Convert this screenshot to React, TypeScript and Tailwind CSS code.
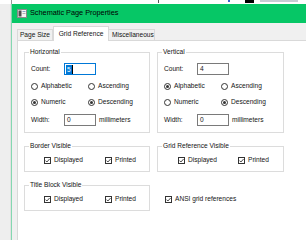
import React from 'react';

const Radio = ({ label, checked, w }: { label: string; checked?: boolean; w?: string }) => (
  <div className={`flex items-center h-[12px] ${w ?? ''}`}>
    <span className="w-[7px] h-[7px] rounded-full border border-[#333] bg-white flex items-center justify-center shrink-0">
      {checked && <span className="w-[3px] h-[3px] rounded-full bg-[#333]" />}
    </span>
    <span className="ml-[3px]">{label}</span>
  </div>
);

const Check = ({ label, w }: { label: string; w?: string }) => (
  <div className={`flex items-center h-[10px] ${w ?? ''}`}>
    <svg width="7" height="7" viewBox="0 0 7 7" className="shrink-0">
      <rect x="0.5" y="0.5" width="6" height="6" fill="#fff" stroke="#333" />
      <polyline points="1.5,3.6 2.9,5 5.6,2" fill="none" stroke="#333" strokeWidth="0.9" />
    </svg>
    <span className="ml-[3px]">{label}</span>
  </div>
);

const Field = ({ value, focused }: { value: string; focused?: boolean }) => (
  <div
    className={`w-[32px] h-[12px] bg-white border flex items-center pl-[1px] ${
      focused ? 'border-[#0078d7]' : 'border-[#7a7a7a]'
    }`}
  >
    {focused ? (
      <>
        <span className="bg-[#0078d7] text-white h-[9px] leading-[9px] px-[1px]">{value}</span>
        <span className="w-[1px] h-[9px] bg-black" />
      </>
    ) : (
      <span className="pl-[1px]">{value}</span>
    )}
  </div>
);

const Group = ({ title, children, className }: { title: string; children: React.ReactNode; className?: string }) => (
  <fieldset className={`border border-[#dcdcdc] px-[6px] pb-[6px] ${className ?? ''}`}>
    <legend className="-ml-[2px] px-[1px] leading-[8px]">{title}</legend>
    {children}
  </fieldset>
);

const AxisGroup = ({ title, count, focused, alpha }: { title: string; count: string; focused?: boolean; alpha?: boolean }) => (
  <Group title={title}>
    <div className="flex items-center mt-[7px]">
      <span className="w-[33px]">Count:</span>
      <Field value={count} focused={focused} />
    </div>
    <div className="flex mt-[5px]">
      <Radio label="Alphabetic" checked={alpha} w="w-[57px]" />
      <Radio label="Ascending" />
    </div>
    <div className="flex mt-[4px]">
      <Radio label="Numeric" checked={!alpha} w="w-[57px]" />
      <Radio label="Descending" checked />
    </div>
    <div className="flex items-center mt-[6px]">
      <span className="w-[33px]">Width:</span>
      <Field value="0" />
      <span className="ml-[3px] whitespace-nowrap">millimeters</span>
    </div>
  </Group>
);

export default function App() {
  return (
    <div className="w-[306px] h-[240px] overflow-hidden bg-[#f1f1f1] flex flex-col text-[6.6px] text-[#141414] font-['Liberation_Sans',Arial,sans-serif]">
      {/* strip of the app behind the dialog */}
      <div className="h-[4px] bg-white flex items-start shrink-0">
        <span className="ml-[11px] w-[1px] h-[4px] bg-[#9a9a9a]" />
        <span className="ml-[146px] w-[1px] h-[3px] bg-[#555]" />
        <span className="ml-[69px] w-[2px] h-[2px] bg-[#3a5fcf]" />
        <span className="ml-[15px] w-[9px] h-[3px] bg-black" />
        <span className="ml-[6px] w-[38px] h-[2px] bg-[#c8ccd4]" />
      </div>
      <div className="flex flex-1 min-h-0">
        <div className="w-[11px] bg-[#eeeeee] border-r border-[#e2e2e2]" />
        <div className="w-[1px] bg-[#84d8b1]" />
        <div className="flex-1 flex flex-col min-w-0">
          <div className="h-[19px] bg-[#06c766] flex items-center pl-[5px] shrink-0">
            <svg width="10" height="9" viewBox="0 0 10 9" className="shrink-0">
              <rect x="0.5" y="0.5" width="9" height="8" fill="#f4f4f4" stroke="#8a8a8a" />
              <rect x="1.5" y="1.5" width="3" height="6" fill="#4c4c4c" />
              <rect x="5.5" y="2" width="3" height="1" fill="#8aa3c8" />
              <rect x="5.5" y="4" width="3" height="1" fill="#b0b0b0" />
            </svg>
            <span className="ml-[3px] text-[7.3px] text-black">Schematic Page Properties</span>
          </div>
          <div className="flex-1 bg-[#f0f0f0] pl-[5px] pt-[3px] flex flex-col min-h-0">
            <div className="flex items-end h-[14px] shrink-0">
              <div className="w-[36px] h-[11px] border border-b-0 border-[#d9d9d9] flex items-center justify-center">
                Page Size
              </div>
              <div className="relative z-10 w-[56px] h-[15px] -mb-[1px] bg-white border border-b-0 border-[#d9d9d9] flex items-start pt-[2px] justify-center">
                Grid Reference
              </div>
              <div className="w-[46px] h-[11px] border border-b-0 border-l-0 border-[#d9d9d9] flex items-center pl-[3px]">
                Miscellaneous
              </div>
            </div>
            <div className="flex-1 w-[320px] bg-white border-l border-t border-[#d9d9d9] pl-[6px] pt-[7px]">
              <div className="grid grid-cols-[126px_127px] gap-x-[7px] gap-y-[9px]">
                <AxisGroup title="Horizontal" count="5" focused />
                <AxisGroup title="Vertical" count="4" alpha />
                <Group title="Border Visible">
                  <div className="flex mt-[5px] pl-[13px]">
                    <Check label="Displayed" w="w-[61px]" />
                    <Check label="Printed" />
                  </div>
                </Group>
                <Group title="Grid Reference Visible">
                  <div className="flex mt-[5px] pl-[14px]">
                    <Check label="Displayed" w="w-[60px]" />
                    <Check label="Printed" />
                  </div>
                </Group>
                <Group title="Title Block Visible">
                  <div className="flex mt-[5px] pl-[13px]">
                    <Check label="Displayed" w="w-[61px]" />
                    <Check label="Printed" />
                  </div>
                </Group>
                <div className="pt-[13px] pl-[8px]">
                  <Check label="ANSI grid references" />
                </div>
              </div>
            </div>
          </div>
        </div>
      </div>
    </div>
  );
}
